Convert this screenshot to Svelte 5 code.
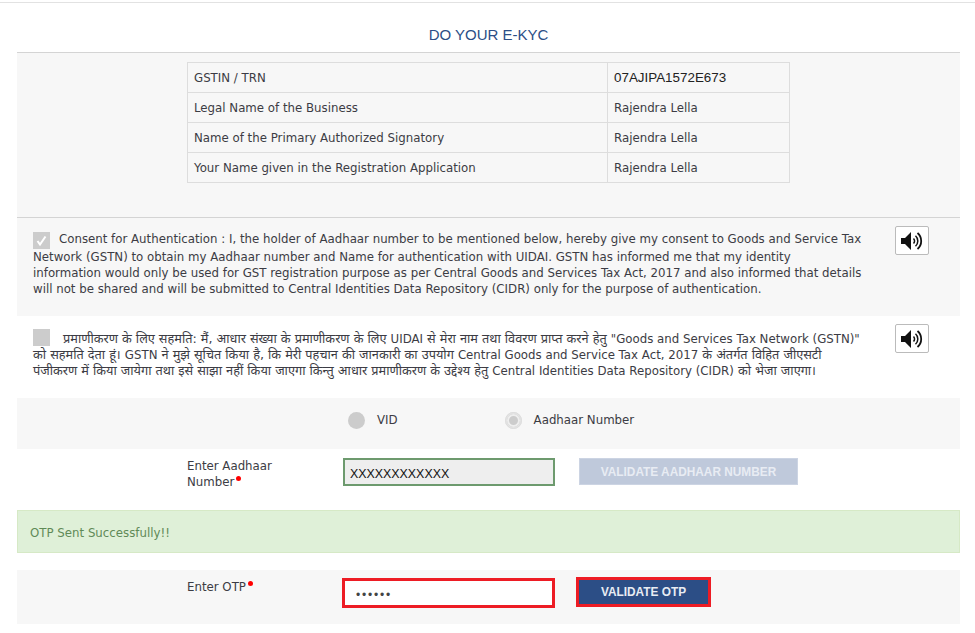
<script>
  const details = [
    { label: "GSTIN / TRN", value: "07AJIPA1572E673", mono: true },
    { label: "Legal Name of the Business", value: "Rajendra Lella" },
    { label: "Name of the Primary Authorized Signatory", value: "Rajendra Lella" },
    { label: "Your Name given in the Registration Application", value: "Rajendra Lella" },
  ];
</script>

{#snippet speaker()}
  <button class="speaker" type="button" aria-label="Play">
    <svg width="24" height="20" viewBox="0 0 24 20">
      <path d="M1 7h4l6-6v18l-6-6h-4z" fill="#111" />
      <path d="M13.500 7.500a3.500 3.500 0 0 1 0 5" fill="none" stroke="#111" stroke-width="1.500" />
      <path d="M15.500 4.800a7 7 0 0 1 0 10.400" fill="none" stroke="#111" stroke-width="1.500" />
      <path d="M17.500 2a10.500 10.500 0 0 1 0 16" fill="none" stroke="#111" stroke-width="1.800" />
    </svg>
  </button>
{/snippet}

<div class="page">
  <h2>DO YOUR E-KYC</h2>

  <section class="details">
    <table>
      <tbody>
        {#each details as row}
          <tr>
            <td class="name">{row.label}</td>
            <td class:mono={row.mono}>{row.value}</td>
          </tr>
        {/each}
      </tbody>
    </table>
  </section>

  <section class="consent grey">
    <p>
      <span class="check on">
        <svg width="11" height="11" viewBox="0 0 11 11">
          <path d="M1.500 6l2.500 3.500 5.500-8" fill="none" stroke="#fff" stroke-width="2" />
        </svg>
      </span>Consent for Authentication : I, the holder of Aadhaar number to be mentioned below, hereby give my consent to Goods and Service Tax<br />
      Network (GSTN) to obtain my Aadhaar number and Name for authentication with UIDAI. GSTN has informed me that my identity<br />
      information would only be used for GST registration purpose as per Central Goods and Services Tax Act, 2017 and also informed that details<br />
      will not be shared and will be submitted to Central Identities Data Repository (CIDR) only for the purpose of authentication.
    </p>
    {@render speaker()}
  </section>

  <section class="consent hindi">
    <p>
      <span class="check wide"></span>प्रमाणीकरण के लिए सहमति: मैं, आधार संख्या के प्रमाणीकरण के लिए <span class="en">UIDAI</span> से मेरा नाम तथा विवरण प्राप्त करने हेतु <span class="en">"Goods and Services Tax Network (GSTN)"</span><br />
      को सहमति देता हूं। <span class="en">GSTN</span> ने मुझे सूचित किया है, कि मेरी पहचान की जानकारी का उपयोग <span class="en">Central Goods and Service Tax Act, 2017</span> के अंतर्गत विहित जीएसटी<br />
      पंजीकरण में किया जायेगा तथा इसे साझा नहीं किया जाएगा किन्तु आधार प्रमाणीकरण के उद्देश्य हेतु <span class="en">Central Identities Data Repository (CIDR)</span> को भेजा जाएगा।
    </p>
    {@render speaker()}
  </section>

  <section class="radios grey">
    <span class="radio"></span>
    <span class="radio-label vid">VID</span>
    <span class="radio selected"></span>
    <span class="radio-label">Aadhaar Number</span>
  </section>

  <section class="field aadhaar">
    <div class="field-label">Enter Aadhaar Number<i class="req"></i></div>
    <input class="aadhaar-input" value="XXXXXXXXXXXX" readonly />
    <button class="btn off" type="button">VALIDATE AADHAAR NUMBER</button>
  </section>

  <div class="alert">OTP Sent Successfully!!</div>

  <section class="field otp grey">
    <div class="field-label">Enter OTP<i class="req"></i></div>
    <input class="otp-input" type="password" value="123456" readonly />
    <button class="btn go" type="button">VALIDATE OTP</button>
  </section>
</div>

<style>
  :global(body) {
    background: #fff;
    color: #3c3c44;
    font-family: "DejaVu Sans", Verdana, sans-serif;
    font-size: 11.79px;
    overflow: hidden;
  }

  .page {
    height: 631px;
    margin: 0 15px 0 17px;
    position: relative;
  }

  .page::before {
    content: "";
    position: absolute;
    top: 2px;
    left: -17px;
    right: -15px;
    height: 1px;
    background: #e2e2e2;
  }

  h2 {
    margin: 0;
    height: 53px;
    box-sizing: border-box;
    text-align: center;
    font: 400 15px/70px "Liberation Sans", Arial, sans-serif;
    color: #2c4e86;
    border-bottom: 1px solid #d4d4d4;
  }

  .grey {
    background: #f7f7f7;
  }

  .details {
    box-sizing: border-box;
    height: 165px;
    padding: 9px 0 0 170px;
    background: #f7f7f7;
    border-bottom: 1px solid #d4d4d4;
  }

  table {
    border-collapse: collapse;
    width: 603px;
    table-layout: fixed;
  }

  td {
    height: 30px;
    padding: 0 0 0 6px;
    box-sizing: border-box;
    border: 1px solid #ddd;
  }

  td.name {
    width: 420px;
  }

  td.mono {
    font: 13.4px "Liberation Sans", Arial, sans-serif;
    color: #222;
  }

  .consent {
    display: flex;
    justify-content: space-between;
    align-items: flex-start;
    box-sizing: border-box;
    padding: 8px 31px 0 16px;
    height: 98px;
  }

  .consent p {
    margin: 0;
    line-height: 16px;
    white-space: nowrap;
    padding-top: 5px;
  }

  .hindi {
    height: 82px;
  }

  .hindi p {
    font-family: "DejaVu Sans", "Noto Sans", "Noto Sans Devanagari", sans-serif;
    font-size: 12.75px;
  }

  .en {
    font-size: 11.79px;
  }

  .check {
    display: inline-flex;
    align-items: center;
    justify-content: center;
    width: 17px;
    height: 17px;
    margin-right: 9px;
    background: #ccc;
    vertical-align: -3px;
  }

  .check.wide {
    margin-right: 13px;
  }

  .speaker {
    display: flex;
    align-items: center;
    justify-content: center;
    width: 34px;
    height: 29px;
    padding: 0;
    background: #fff;
    border: 1px solid #bbb;
    border-radius: 2px;
  }

  .radios {
    display: flex;
    align-items: center;
    box-sizing: border-box;
    height: 51px;
    padding: 0 0 7px 331px;
  }

  .radio {
    box-sizing: border-box;
    width: 17px;
    height: 17px;
    border-radius: 50%;
    background: #ccc;
  }

  .radio.selected {
    background: #ccc;
    border: 2px solid #e4e4e4;
    box-shadow: inset 0 0 0 2px #eee;
    outline: 1px solid #ddd;
    outline-offset: -1px;
  }

  .radio-label {
    margin-left: 12px;
  }

  .vid {
    margin-right: 107px;
  }

  .field {
    display: flex;
    align-items: flex-start;
    box-sizing: border-box;
    padding-left: 170px;
  }

  .field-label {
    width: 156px;
    flex: none;
    line-height: 16px;
  }

  .aadhaar {
    height: 61px;
    padding-top: 9px;
  }

  .aadhaar .field-label {
    width: 95px;
    margin-right: 61px;
  }

  .otp .field-label {
    padding-top: 1px;
    width: 155px;
  }

  .req {
    display: inline-block;
    width: 5px;
    height: 5px;
    margin-left: 2px;
    border-radius: 50%;
    background: #f00;
    vertical-align: 5px;
  }

  input {
    box-sizing: border-box;
    flex: none;
    font: 12.4px "Liberation Sans", Arial, sans-serif;
    outline: none;
    color: #111;
  }

  .aadhaar-input {
    width: 212px;
    height: 28px;
    padding: 3px 5px 0;
    background: #eee;
    border: 2px solid #6d9a6e;
  }

  .otp-input {
    width: 213px;
    height: 30px;
    padding: 3px 11px 0;
    background: #fff;
    border: 3px solid #ed1c24;
    color: #444;
    font-size: 12px;
    letter-spacing: 1.8px;
  }

  .btn {
    flex: none;
    font: 700 11.85px "Liberation Sans", Arial, sans-serif;
    color: #e8ecf3;
    padding: 0;
  }

  .btn.off {
    width: 219px;
    height: 27px;
    margin-left: 24px;
    background: #bfc9db;
    border: 1px solid #ccd4e3;
  }

  .btn.go {
    width: 135px;
    height: 30px;
    margin-left: 21px;
    margin-top: -1px;
    background: #2c4e86;
    border: 3px solid #ed1c24;
  }

  .alert {
    box-sizing: border-box;
    height: 43px;
    margin-bottom: 17px;
    padding-left: 12px;
    line-height: 44px;
    color: #5f8a57;
    background: #dff0d8;
    border: 1px solid #d6e9c6;
  }

  .otp {
    height: 54px;
    padding-top: 8px;
  }
</style>
